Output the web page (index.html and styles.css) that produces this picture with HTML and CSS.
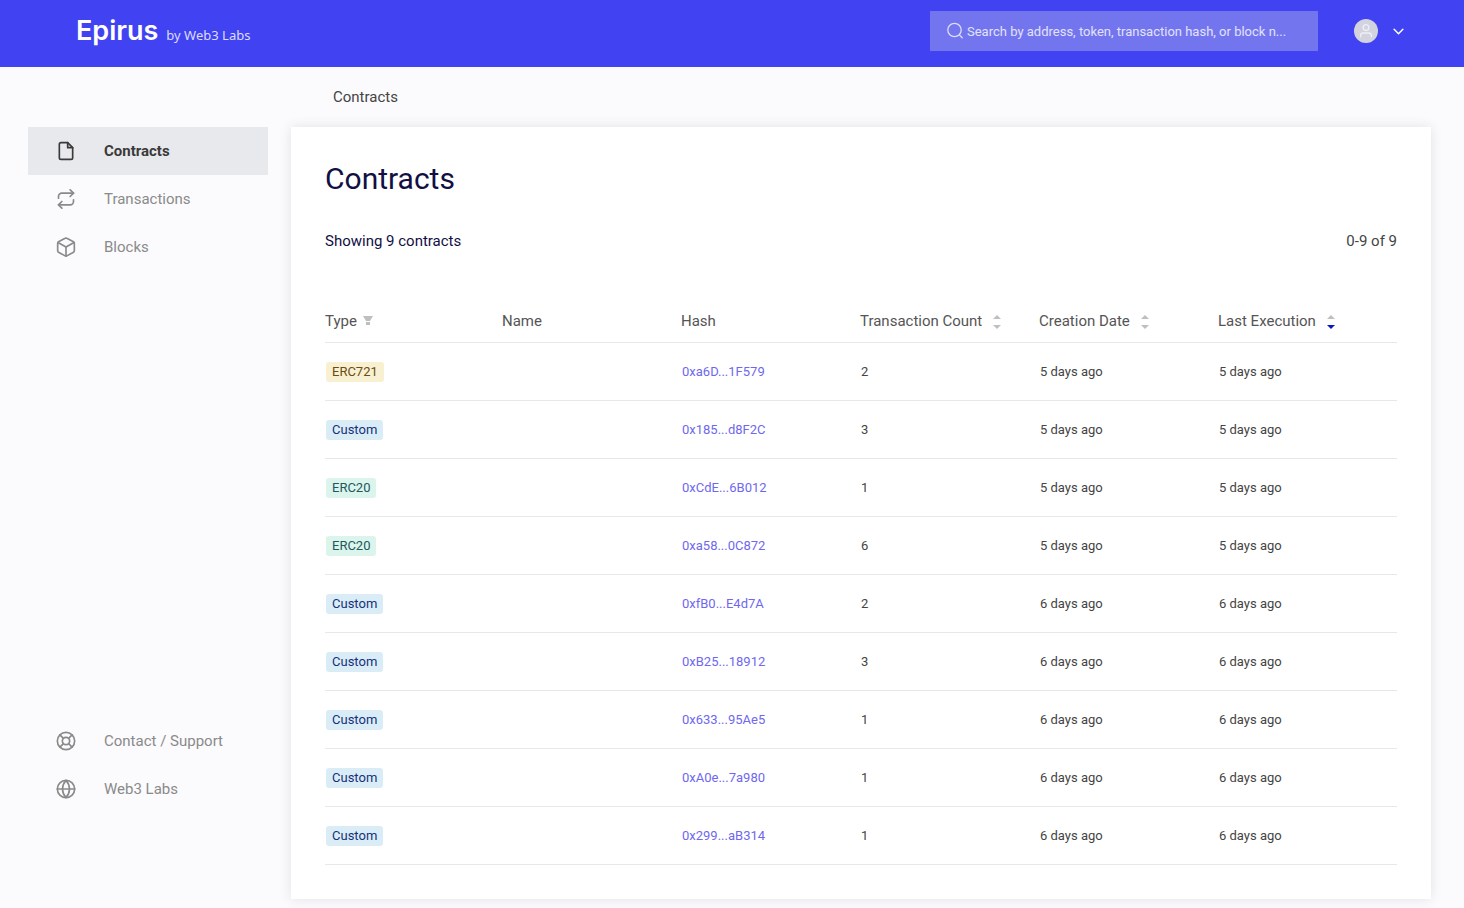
FILE: index.html
```html
<!DOCTYPE html>
<html lang="en">
<head>
    <meta charset="UTF-8">
    <meta name="viewport" content="width=device-width, initial-scale=1.0">
    <title>Contracts - Epirus</title>
    <link rel="stylesheet" href="styles.css">
</head>
<body>

    <header class="header">
        <a href="#" class="logo">
            <span class="logo-name">Epirus</span>
            <span class="logo-by">by Web3 Labs</span>
        </a>
        <form class="search">
            <svg class="search-icon" viewBox="0 0 18 18" fill="none" stroke="currentColor" stroke-width="1.3" stroke-linecap="round">
                <circle cx="8.5" cy="8" r="6.7"/>
                <path d="M13.4 12.9L16.2 15.7"/>
            </svg>
            <input type="text" class="search-input" aria-label="Search" placeholder="Search by address, token, transaction hash, or block n...">
        </form>
        <button type="button" class="account" aria-label="Account">
            <svg class="avatar" viewBox="0 0 24 24" fill="none" stroke="#eeeef6" stroke-width="1.3" stroke-linecap="round">
                <circle cx="12" cy="12" r="12" fill="#d3d3e0" stroke="none"/>
                <circle cx="12" cy="8.6" r="2.9"/>
                <path d="M6.6 17.8v-1a2.8 2.8 0 0 1 2.8-2.8h5.2a2.8 2.8 0 0 1 2.8 2.8v1"/>
            </svg>
            <svg class="chevron" viewBox="0 0 10 6" fill="none" stroke="#fff" stroke-width="1.3" stroke-linecap="round" stroke-linejoin="round">
                <path d="M1 1l4 4 4-4"/>
            </svg>
        </button>
    </header>

    <div class="layout">
        <aside class="sidebar">
            <nav class="menu">
                <a href="#" class="menu-item active">
                    <svg class="menu-icon" viewBox="0 0 24 24">
                        <path d="M14 2H6a2 2 0 0 0-2 2v16a2 2 0 0 0 2 2h12a2 2 0 0 0 2-2V8z"/>
                        <path d="M14 2v6h6"/>
                    </svg>
                    Contracts
                </a>
                <a href="#" class="menu-item">
                    <svg class="menu-icon" viewBox="0 0 24 24">
                        <path d="M17 1l4 4-4 4"/>
                        <path d="M3 11V9a4 4 0 0 1 4-4h14"/>
                        <path d="M7 23l-4-4 4-4"/>
                        <path d="M21 13v2a4 4 0 0 1-4 4H3"/>
                    </svg>
                    Transactions
                </a>
                <a href="#" class="menu-item">
                    <svg class="menu-icon" viewBox="0 0 24 24">
                        <path d="M22 16.5V7.5a2 2 0 0 0-1-1.73l-8-4.2a2 2 0 0 0-2 0l-8 4.2A2 2 0 0 0 2 7.5v9a2 2 0 0 0 1 1.73l8 4.4a2 2 0 0 0 2 0l8-4.4a2 2 0 0 0 1-1.73z"/>
                        <path d="M2.4 6.6L12 12l9.6-5.4"/>
                        <path d="M12 22.8V12"/>
                    </svg>
                    Blocks
                </a>
            </nav>
            <nav class="menu">
                <a href="#" class="menu-item">
                    <svg class="menu-icon" viewBox="0 0 24 24">
                        <circle cx="12" cy="12" r="10.4"/>
                        <circle cx="12" cy="12" r="4.4"/>
                        <path d="M4.7 4.7l4.2 4.2M15.1 15.1l4.2 4.2M15.1 8.9l4.2-4.2M4.7 19.3l4.2-4.2"/>
                    </svg>
                    Contact / Support
                </a>
                <a href="#" class="menu-item">
                    <svg class="menu-icon" viewBox="0 0 24 24">
                        <circle cx="12" cy="12" r="10.4"/>
                        <path d="M1.6 12h20.8"/>
                        <path d="M12 1.6a15.8 15.8 0 0 1 4.2 10.4 15.8 15.8 0 0 1-4.2 10.4 15.8 15.8 0 0 1-4.2-10.4 15.8 15.8 0 0 1 4.2-10.4z"/>
                    </svg>
                    Web3 Labs
                </a>
            </nav>
        </aside>

        <main class="content">
            <div class="breadcrumb">Contracts</div>
            <section class="card">
                <h1 class="title">Contracts</h1>
                <div class="summary">
                    <span>Showing 9 contracts</span>
                    <span class="range">0-9 of 9</span>
                </div>
                <table class="contracts">
                    <thead>
                        <tr>
                            <th class="type">Type
                                <button type="button" class="filter" aria-label="Filter by type">
                                    <svg viewBox="0 0 10 9" width="10" height="9"><path d="M0 0h10L7 5H3z"/><path d="M3 6h4v3H3z"/></svg>
                                </button>
                            </th>
                            <th>Name</th>
                            <th>Hash</th>
                            <th>Transaction Count
                                <button type="button" class="sort" aria-label="Sort by transaction count">
                                    <svg viewBox="0 0 8 14" width="8" height="14"><path d="M0 4l4-4 4 4z"/><path class="down" d="M0 10h8l-4 4z"/></svg>
                                </button>
                            </th>
                            <th>Creation Date
                                <button type="button" class="sort" aria-label="Sort by creation date">
                                    <svg viewBox="0 0 8 14" width="8" height="14"><path d="M0 4l4-4 4 4z"/><path class="down" d="M0 10h8l-4 4z"/></svg>
                                </button>
                            </th>
                            <th>Last Execution
                                <button type="button" class="sort sorted" aria-label="Sort by last execution">
                                    <svg viewBox="0 0 8 14" width="8" height="14"><path d="M0 4l4-4 4 4z"/><path class="down" d="M0 10h8l-4 4z"/></svg>
                                </button>
                            </th>
                        </tr>
                    </thead>
                    <tbody>
                        <tr>
                            <td><span class="tag erc721">ERC721</span></td>
                            <td></td>
                            <td><a href="#">0xa6D...1F579</a></td>
                            <td>2</td>
                            <td>5 days ago</td>
                            <td>5 days ago</td>
                        </tr>
                        <tr>
                            <td><span class="tag custom">Custom</span></td>
                            <td></td>
                            <td><a href="#">0x185...d8F2C</a></td>
                            <td>3</td>
                            <td>5 days ago</td>
                            <td>5 days ago</td>
                        </tr>
                        <tr>
                            <td><span class="tag erc20">ERC20</span></td>
                            <td></td>
                            <td><a href="#">0xCdE...6B012</a></td>
                            <td>1</td>
                            <td>5 days ago</td>
                            <td>5 days ago</td>
                        </tr>
                        <tr>
                            <td><span class="tag erc20">ERC20</span></td>
                            <td></td>
                            <td><a href="#">0xa58...0C872</a></td>
                            <td>6</td>
                            <td>5 days ago</td>
                            <td>5 days ago</td>
                        </tr>
                        <tr>
                            <td><span class="tag custom">Custom</span></td>
                            <td></td>
                            <td><a href="#">0xfB0...E4d7A</a></td>
                            <td>2</td>
                            <td>6 days ago</td>
                            <td>6 days ago</td>
                        </tr>
                        <tr>
                            <td><span class="tag custom">Custom</span></td>
                            <td></td>
                            <td><a href="#">0xB25...18912</a></td>
                            <td>3</td>
                            <td>6 days ago</td>
                            <td>6 days ago</td>
                        </tr>
                        <tr>
                            <td><span class="tag custom">Custom</span></td>
                            <td></td>
                            <td><a href="#">0x633...95Ae5</a></td>
                            <td>1</td>
                            <td>6 days ago</td>
                            <td>6 days ago</td>
                        </tr>
                        <tr>
                            <td><span class="tag custom">Custom</span></td>
                            <td></td>
                            <td><a href="#">0xA0e...7a980</a></td>
                            <td>1</td>
                            <td>6 days ago</td>
                            <td>6 days ago</td>
                        </tr>
                        <tr>
                            <td><span class="tag custom">Custom</span></td>
                            <td></td>
                            <td><a href="#">0x299...aB314</a></td>
                            <td>1</td>
                            <td>6 days ago</td>
                            <td>6 days ago</td>
                        </tr>
                    </tbody>
                </table>
            </section>
        </main>
    </div>

</body>
</html>
```

FILE: styles.css
```css
* {
    box-sizing: border-box;
}
body {
    display: flex;
    flex-direction: column;
    min-height: 100vh;
    margin: 0;
    background-color: #fbfbfd;
    color: #444;
    font-family: Roboto, "Liberation Sans", sans-serif;
    font-size: 15px;
    line-height: 20px;
}
a {
    text-decoration: none;
}
button {
    padding: 0;
    border: none;
    background: none;
    cursor: pointer;
}
svg {
    display: block;
}

/* Header */
.header {
    display: flex;
    align-items: center;
    padding: 11px 60px 16px 76px;
    background-color: #4143f3;
}
.logo {
    display: flex;
    align-items: baseline;
    gap: 8px;
    margin-right: auto;
    color: #fff;
    font-family: "Noto Sans", sans-serif;
}
.logo-name {
    font-family: Inter, sans-serif;
    font-size: 27px;
    font-weight: 600;
    line-height: 38px;
}
.logo-by {
    font-size: 13px;
    color: #dcdcfd;
}
.search {
    display: flex;
    align-items: center;
    gap: 3px;
    width: 388px;
    height: 40px;
    padding: 0 16px;
    background-color: #7375ef;
    color: #dcdcfb;
}
.search-icon {
    flex: none;
    width: 18px;
    height: 18px;
}
.search-input {
    flex: 1;
    min-width: 0;
    padding: 0;
    border: none;
    outline: none;
    background: none;
    color: #fff;
    font-family: inherit;
    font-size: 13px;
    text-overflow: ellipsis;
}
.search-input::placeholder {
    color: #e2e2fc;
    opacity: 1;
}
.account {
    display: flex;
    align-items: center;
    gap: 15px;
    margin-left: 36px;
}
.avatar {
    width: 24px;
    height: 24px;
}
.chevron {
    width: 11px;
    height: 7px;
}

/* Sidebar */
.layout {
    flex: 1;
    display: flex;
    gap: 23px;
    padding: 0 33px 9px 28px;
}
.sidebar {
    display: flex;
    flex: none;
    flex-direction: column;
    justify-content: space-between;
    width: 240px;
    padding: 60px 0 86px;
}
.menu-item {
    display: flex;
    align-items: center;
    gap: 28px;
    height: 48px;
    padding: 0 28px;
    color: #8a8a8a;
}
.menu-item.active {
    background-color: #e8e9ed;
    color: #3a3a3a;
    font-weight: bold;
}
.menu-icon {
    width: 20px;
    height: 20px;
    fill: none;
    stroke: currentColor;
    stroke-width: 2;
    stroke-linecap: round;
    stroke-linejoin: round;
}

/* Content */
.content {
    flex: 1;
    min-width: 0;
}
.breadcrumb {
    padding: 20px 42px;
}
.card {
    padding: 34px;
    background-color: #fff;
    box-shadow: 0 0 12px rgba(0, 0, 0, 0.1);
}
.title {
    margin: 0 0 34px;
    color: #120f45;
    font-size: 30px;
    font-weight: normal;
    line-height: 36px;
}
.summary {
    display: flex;
    justify-content: space-between;
    margin-bottom: 48px;
    color: #120f45;
}
.range {
    color: #444;
}

/* Table */
.contracts {
    width: 100%;
    table-layout: fixed;
    border-collapse: separate;
    border-spacing: 0;
    text-align: left;
}
.contracts th,
.contracts td {
    padding: 0;
    border-bottom: 1px solid #e8e8e8;
}
.contracts th {
    height: 44px;
    color: #555;
    font-weight: normal;
}
.contracts .type {
    width: 177px;
}
.contracts td {
    height: 58px;
    padding-left: 1px;
    font-size: 13px;
}
.contracts td a {
    color: #6f68ee;
}
.tag {
    display: inline-block;
    padding: 0 6px;
    border-radius: 3px;
}
.tag.erc721 {
    background-color: #f7f1d2;
    color: #6f4a12;
}
.tag.erc20 {
    background-color: #dbf5ec;
    color: #22575e;
}
.tag.custom {
    background-color: #daedf6;
    color: #15317c;
}
.filter,
.sort {
    fill: #bfbfbf;
    vertical-align: middle;
}
.filter {
    margin-left: 2px;
    padding-bottom: 2px;
}
.sort {
    margin-left: 7px;
}
.sorted .down {
    fill: #0a14c8;
}
```
